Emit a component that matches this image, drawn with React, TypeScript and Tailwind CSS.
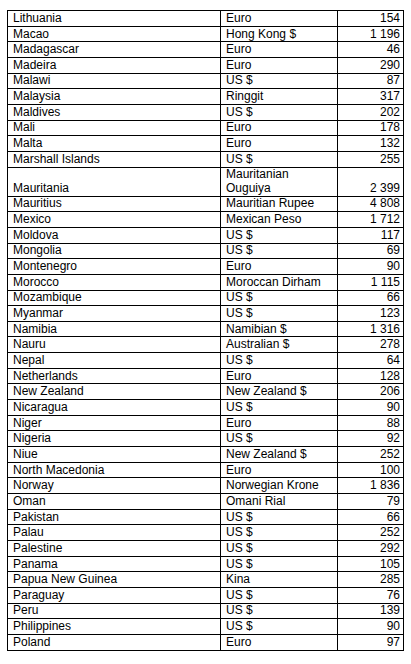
import React from "react";

const rows: [string, string, string][] = [
  ["Lithuania", "Euro", "154"],
  ["Macao", "Hong Kong $", "1 196"],
  ["Madagascar", "Euro", "46"],
  ["Madeira", "Euro", "290"],
  ["Malawi", "US $", "87"],
  ["Malaysia", "Ringgit", "317"],
  ["Maldives", "US $", "202"],
  ["Mali", "Euro", "178"],
  ["Malta", "Euro", "132"],
  ["Marshall Islands", "US $", "255"],
  ["Mauritania", "Mauritanian Ouguiya", "2 399"],
  ["Mauritius", "Mauritian Rupee", "4 808"],
  ["Mexico", "Mexican Peso", "1 712"],
  ["Moldova", "US $", "117"],
  ["Mongolia", "US $", "69"],
  ["Montenegro", "Euro", "90"],
  ["Morocco", "Moroccan Dirham", "1 115"],
  ["Mozambique", "US $", "66"],
  ["Myanmar", "US $", "123"],
  ["Namibia", "Namibian $", "1 316"],
  ["Nauru", "Australian $", "278"],
  ["Nepal", "US $", "64"],
  ["Netherlands", "Euro", "128"],
  ["New Zealand", "New Zealand $", "206"],
  ["Nicaragua", "US $", "90"],
  ["Niger", "Euro", "88"],
  ["Nigeria", "US $", "92"],
  ["Niue", "New Zealand $", "252"],
  ["North Macedonia", "Euro", "100"],
  ["Norway", "Norwegian Krone", "1 836"],
  ["Oman", "Omani Rial", "79"],
  ["Pakistan", "US $", "66"],
  ["Palau", "US $", "252"],
  ["Palestine", "US $", "292"],
  ["Panama", "US $", "105"],
  ["Papua New Guinea", "Kina", "285"],
  ["Paraguay", "US $", "76"],
  ["Peru", "US $", "139"],
  ["Philippines", "US $", "90"],
  ["Poland", "Euro", "97"],
];

export default function App() {
  return (
    <div
      className="min-h-[664px] w-[411px] bg-white pt-[10px] pl-[7px] text-[12px] leading-[13.8px] text-black"
      style={{ fontFamily: '"Liberation Sans", Arial, sans-serif' }}
    >
      <div className="flex w-[397px] flex-col border-l border-t border-black">
        {rows.map(([country, currency, amount]) => {
          const tall = country === "Mauritania";
          return (
            <div
              key={country}
              className={`flex border-b border-black ${tall ? "h-[29px]" : "h-[15.67px]"}`}
            >
              <div className="flex w-[213px] shrink-0 items-end border-r border-black pl-[5px]">
                <span className="whitespace-nowrap">{country}</span>
              </div>
              <div className="flex w-[117px] shrink-0 items-end border-r border-black pl-[5px]">
                {tall ? (
                  <span className="flex flex-col">
                    <span>Mauritanian</span>
                    <span>Ouguiya</span>
                  </span>
                ) : (
                  <span className="whitespace-nowrap">{currency}</span>
                )}
              </div>
              <div className="flex flex-1 items-end justify-end border-r border-black pr-[3px]">
                <span className="whitespace-nowrap">{amount}</span>
              </div>
            </div>
          );
        })}
      </div>
    </div>
  );
}
